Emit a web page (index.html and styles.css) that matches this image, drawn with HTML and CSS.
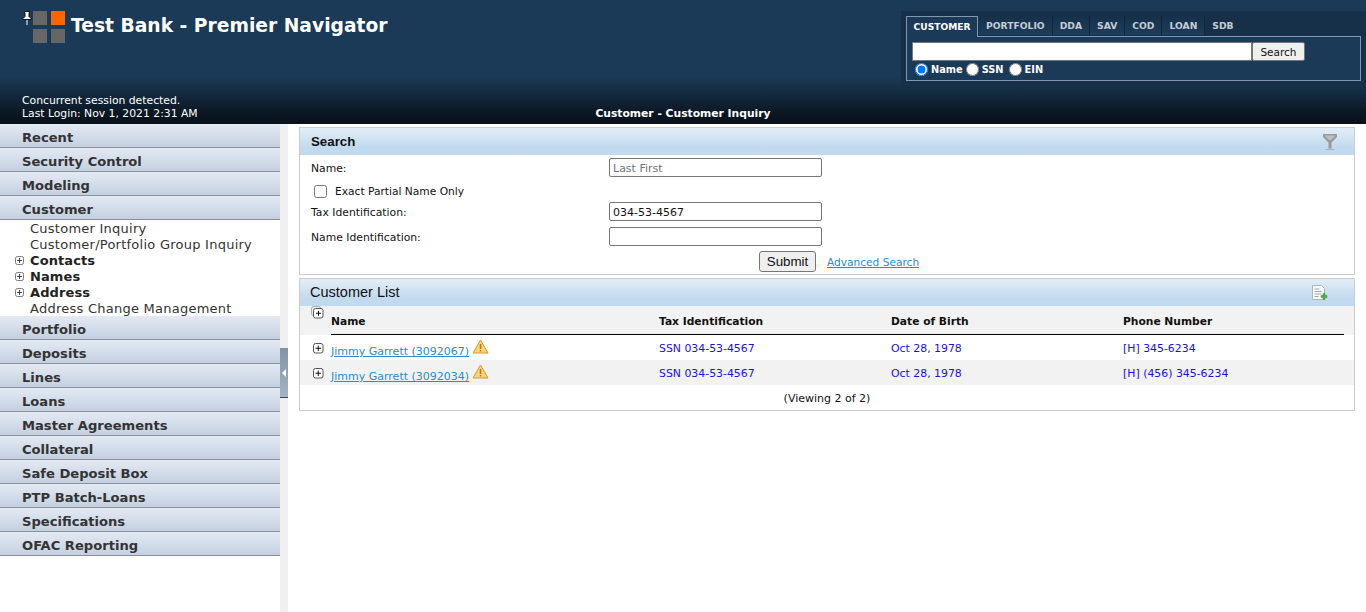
FILE: index.html
```html
<!DOCTYPE html>
<html lang="en">
<head>
<meta charset="utf-8">
<title>Test Bank - Premier Navigator</title>
<link rel="stylesheet" href="styles.css">
</head>
<body>
<header class="top">
  <div class="top-main">
    <div class="brand">
      <svg class="pin" width="10" height="15" viewBox="0 0 10 15"><path d="M2.500.5h5v1H7v4l2 2v1H1v-1l2-2v-4h-.5z" fill="#fff" stroke="#111" stroke-width="1"/><path d="M5 9v5" stroke="#fff" stroke-width="1"/></svg>
      <div class="logo"><i></i><i class="on"></i><i></i><i></i></div>
      <h1 class="app-title">Test Bank - Premier Navigator</h1>
    </div>
    <div class="quick">
      <div class="tabs">
        <span class="tab active">CUSTOMER</span><span class="tab">PORTFOLIO</span><span class="tab">DDA</span><span class="tab">SAV</span><span class="tab">COD</span><span class="tab">LOAN</span><span class="tab last">SDB</span>
      </div>
      <div class="quick-panel">
        <div class="quick-row"><input class="quick-input" type="text"><button class="quick-btn">Search</button></div>
        <div class="radios">
          <label><input type="radio" name="q" checked>Name</label>
          <label><input type="radio" name="q">SSN</label>
          <label><input type="radio" name="q">EIN</label>
        </div>
      </div>
    </div>
  </div>
  <div class="top-foot">
    <div class="session">Concurrent session detected.<br>Last Login: Nov 1, 2021 2:31 AM</div>
    <div class="page-title">Customer - Customer Inquiry</div>
    <div></div>
  </div>
</header>
<div class="body">
  <nav class="side">
    <a class="sec">Recent</a>
    <a class="sec">Security Control</a>
    <a class="sec">Modeling</a>
    <a class="sec">Customer</a>
    <ul class="sub">
      <li>Customer Inquiry</li>
      <li>Customer/Portfolio Group Inquiry</li>
      <li class="grp"><svg class="mini" width="9" height="9" viewBox="0 0 9 9"><rect x=".5" y=".5" width="8" height="8" rx="2" fill="#fff" stroke="#777"/><path d="M2 4.500h5M4.500 2v5" stroke="#444"/></svg>Contacts</li>
      <li class="grp"><svg class="mini" width="9" height="9" viewBox="0 0 9 9"><rect x=".5" y=".5" width="8" height="8" rx="2" fill="#fff" stroke="#777"/><path d="M2 4.500h5M4.500 2v5" stroke="#444"/></svg>Names</li>
      <li class="grp"><svg class="mini" width="9" height="9" viewBox="0 0 9 9"><rect x=".5" y=".5" width="8" height="8" rx="2" fill="#fff" stroke="#777"/><path d="M2 4.500h5M4.500 2v5" stroke="#444"/></svg>Address</li>
      <li>Address Change Management</li>
    </ul>
    <a class="sec">Portfolio</a>
    <a class="sec">Deposits</a>
    <a class="sec">Lines</a>
    <a class="sec">Loans</a>
    <a class="sec">Master Agreements</a>
    <a class="sec">Collateral</a>
    <a class="sec">Safe Deposit Box</a>
    <a class="sec">PTP Batch-Loans</a>
    <a class="sec">Specifications</a>
    <a class="sec">OFAC Reporting</a>
  </nav>
  <div class="gutter"><div class="handle"><span class="arrow"></span></div></div>
  <main class="main">
    <section class="panel search">
      <div class="panel-head">
        <h2 class="panel-title bold">Search</h2>
        <svg class="filter" width="14" height="16" viewBox="0 0 14 16"><path d="M0 0h14v3L8.500 8.500v6h-3v-6L0 3z" fill="#989a9c"/><path d="M1.500 1.500h11L8 6H6z" fill="#bcbec0"/><path d="M2.500 15.500h9" stroke="#aeb0b2"/></svg>
      </div>
      <div class="form">
        <label class="f-label">Name:</label><input class="f-input" type="text" placeholder="Last First">
        <label class="check"><input type="checkbox">Exact Partial Name Only</label>
        <label class="f-label">Tax Identification:</label><input class="f-input" type="text" value="034-53-4567">
        <label class="f-label">Name Identification:</label><input class="f-input" type="text">
      </div>
      <div class="actions"><button class="submit">Submit</button><a class="link adv">Advanced Search</a></div>
    </section>
    <section class="panel list">
      <div class="panel-head">
        <h2 class="panel-title">Customer List</h2>
        <svg class="docplus" width="17" height="16" viewBox="0 0 17 16"><path d="M1.500.5h9l3 3v11h-12z" fill="#fbfcfd" stroke="#a9b4bd"/><path d="M3.500 4h5M3.500 6.500h7M3.500 9h7M3.500 11.500h4" stroke="#9aa3aa"/><path d="M12 8.500h2v2h2v2h-2v2h-2v-2h-2v-2h2z" fill="#52ad52" stroke="#3a8f3a" stroke-width=".5"/></svg>
      </div>
      <table class="grid">
        <colgroup><col class="c0"><col class="c1"><col class="c2"><col class="c2"><col class="c3"><col class="c4"></colgroup>
        <thead>
          <tr>
            <th class="exp"><svg class="allplus" width="13" height="13" viewBox="0 0 13 13"><rect x=".5" y=".5" width="9" height="9" rx="2" fill="#eee" stroke="#aaa"/><rect x="2.500" y="2.500" width="9.500" height="9.500" rx="2" fill="#fff" stroke="#555"/><path d="M5 7.250h5M7.500 4.750v5" stroke="#111"/></svg></th>
            <th>Name</th><th>Tax Identification</th><th>Date of Birth</th><th>Phone Number</th><th class="blank"></th>
          </tr>
        </thead>
        <tbody>
          <tr>
            <td class="exp"><svg width="11" height="11" viewBox="0 0 11 11"><rect x=".5" y=".5" width="9.500" height="9.500" rx="2" fill="#fff" stroke="#555"/><path d="M2.500 5.250h5.500M5.250 2.500v5.500" stroke="#111"/></svg></td>
            <td class="name"><a class="link">Jimmy Garrett (3092067)</a><svg class="warn" width="17" height="15" viewBox="0 0 17 15"><path d="M8.500 1 16 14H1z" fill="#f7d774" stroke="#d9962c" stroke-linejoin="round"/><path d="M8.500 5v5M8.500 11v1.500" stroke="#b9781c" stroke-width="1.500"/></svg></td>
            <td class="val">SSN 034-53-4567</td><td class="val">Oct 28, 1978</td><td class="val">[H] 345-6234</td><td></td>
          </tr>
          <tr class="alt">
            <td class="exp"><svg width="11" height="11" viewBox="0 0 11 11"><rect x=".5" y=".5" width="9.500" height="9.500" rx="2" fill="#fff" stroke="#555"/><path d="M2.500 5.250h5.500M5.250 2.500v5.500" stroke="#111"/></svg></td>
            <td class="name"><a class="link">Jimmy Garrett (3092034)</a><svg class="warn" width="17" height="15" viewBox="0 0 17 15"><path d="M8.500 1 16 14H1z" fill="#f7d774" stroke="#d9962c" stroke-linejoin="round"/><path d="M8.500 5v5M8.500 11v1.500" stroke="#b9781c" stroke-width="1.500"/></svg></td>
            <td class="val">SSN 034-53-4567</td><td class="val">Oct 28, 1978</td><td class="val">[H] (456) 345-6234</td><td></td>
          </tr>
        </tbody>
      </table>
      <div class="viewing">(Viewing 2 of 2)</div>
    </section>
  </main>
</div>
</body>
</html>
```
FILE: styles.css
```css
* { box-sizing: border-box; }
html, body { margin: 0; height: 100%; }
body {
  display: flex; flex-direction: column; height: 612px; overflow: hidden;
  font-family: "DejaVu Sans", Verdana, sans-serif; font-size: 11px; color: #111; background: #fff;
}
.top {
  height: 124px; flex: none; display: flex; flex-direction: column; justify-content: space-between;
  background: linear-gradient(to bottom, #1b3a57 0, #1b3a57 76px, #0a1520 116px, #09121b 124px);
  color: #fff;
}
.top-main { display: flex; justify-content: space-between; align-items: flex-start; }
.brand { display: flex; align-items: flex-start; padding: 11px 0 0 22px; }
.pin { flex: none; margin-right: 1px; }
.logo { display: grid; grid-template-columns: 14px 14px; gap: 4px; width: 32px; flex: none; }
.logo i { display: block; height: 14px; background: #666; }
.logo i.on { background: #f60; }
.app-title { margin: 3px 0 0 6px; font-size: 18.700px; line-height: 24px; font-weight: bold; color: #fff; }
.quick { width: 465px; height: 76px; margin-top: 11px; padding: 5px 5px 6px; background: #16304a; }
.tabs { display: flex; height: 20px; position: relative; z-index: 1; }
.tab {
  font-size: 9.200px; font-weight: bold; color: #c5ccd3; line-height: 20px; height: 19px; padding: 0 7px;
  border-right: 1px solid #10243a;
  background: linear-gradient(to bottom, #16304a, #1d3d5b);
}
.tab.last { border-right: 0; background: none; }
.tab.active {
  color: #fff; height: 21px; width: 72px; margin-right: 1px; padding: 0; text-align: center; background: #1b3a57;
  font-size: 9.100px; line-height: 21px;
  border: 1px solid #8398ad; border-bottom: 0;
}
.quick-panel { height: 45px; border: 1px solid #8398ad; background: #1b3a57; padding: 5px 5px 0; }
.quick-row { display: flex; height: 19px; }
.quick-input { width: 340px; height: 19px; border: 1px solid #777; background: #fff; padding: 0; margin: 0; }
.quick-btn {
  width: 53px; height: 19px; padding: 1px 0 0; font: 10.500px "DejaVu Sans", sans-serif; color: #111;
  background: #efefef; border: 1px solid #767676; border-radius: 2px;
}
.radios { display: flex; align-items: center; height: 14px; margin-top: 1px; font-size: 9.800px; font-weight: bold; color: #fff; }
.radios label { display: flex; align-items: center; }
.radios label:last-child { margin-left: 2px; }
.radios input { width: 13px; height: 13px; margin: 0 3px 0 3px; }
.top-foot { display: grid; grid-template-columns: 1fr auto 1fr; align-items: end; padding: 0 0 4px 0; }
.session { font-size: 10.800px; line-height: 13px; padding-left: 22px; }
.page-title { font-size: 10.750px; font-weight: bold; line-height: 12px; }

.body { flex: 1; display: flex; min-height: 0; }
.side { width: 280px; flex: none; background: #fff; }
.sec {
  display: block; height: 24px; padding-left: 22px; line-height: 27px; font-size: 13.100px; font-weight: bold; color: #333;
  background: linear-gradient(to bottom, #e4eaf3, #c4d0e1); border-bottom: 1px solid #8c9196;
}
.sub { list-style: none; margin: 0; padding: 0; }
.sub li { height: 16px; line-height: 17px; padding-left: 30px; font-size: 13px; letter-spacing: .25px; color: #333; position: relative; }
.sub li.grp { font-weight: bold; letter-spacing: .1px; color: #222; }
.mini { position: absolute; left: 15px; top: 4px; }
.gutter { width: 8px; flex: none; background: #f0f0f0; }
.handle {
  display: flex; align-items: center; justify-content: center; height: 50px; margin-top: 224px;
  background: linear-gradient(to bottom, #8393a5, #a5b3c4); border-bottom: 1px solid #3a4754;
}
.arrow { width: 0; height: 0; border: 4px solid transparent; border-left: 0; border-right: 4px solid #fff; }
.main { flex: 1; min-width: 0; padding: 3px 11px 0; background: #fff; }
.panel { border: 1px solid #ccc; }
.panel-head {
  height: 27px; display: flex; align-items: center; justify-content: space-between; padding: 0 17px 0 10px;
  background: linear-gradient(to bottom, #e3eef7, #c3daee 70%, #c2daee);
}
.list .panel-head { padding-right: 26px; }
.panel-title { margin: 0; padding-bottom: 2px; font: normal 14.500px "Liberation Sans", sans-serif; color: #111; }
.panel-title.bold { font-weight: bold; font-size: 13.300px; padding: 0 0 0 1px; }
.search { height: 148px; }
.form { display: grid; grid-template-columns: 298px 213px; padding: 3px 0 0 11px; align-items: center; }
.f-label { height: 19px; line-height: 22px; font-size: 10.800px; margin-bottom: 6px; }
.f-input {
  width: 213px; height: 19px; padding: 1px 3px 0; margin: 0 0 6px; border: 1px solid #767676; border-radius: 2px;
  font: 11px "DejaVu Sans", sans-serif; color: #111; background: #fff;
}
.f-input::placeholder { color: #757575; }
.check { grid-column: 1 / span 2; display: flex; align-items: center; height: 16px; margin: 0 0 3px; font-size: 10.670px; }
.check input { width: 13px; height: 13px; margin: 0 8px 0 3px; }
.actions { display: flex; align-items: center; padding-left: 459px; margin-top: -1px; }
.submit {
  width: 57px; height: 21px; padding: 0; font: 13.330px "Liberation Sans", sans-serif; color: #111;
  background: #efefef; border: 1px solid #767676; border-radius: 3px;
}
.link { color: #2a8bd0; text-decoration: underline; }
.adv { margin-left: 11px; font-size: 10.600px; }
.list { margin-top: 3px; height: 133px; }
.grid { width: 100%; border-collapse: separate; border-spacing: 0; table-layout: fixed; }
.c0 { width: 31px; } .c1 { width: 328px; } .c2 { width: 232px; } .c3 { width: 221px; }
.grid thead tr { background: #f2f2f2; }
.grid th { text-align: left; font-size: 10.700px; font-weight: bold; padding: 0 0 1px; border-bottom: 1px solid #000; vertical-align: bottom; line-height: 22px; height: 29px; }
.grid th.exp, .grid th.blank { border-bottom: 0; }
.grid th.exp { vertical-align: top; padding: 0 0 0 11px; line-height: 0; }
.grid td { height: 25px; padding: 2px 0 0; font-size: 11px; }
.grid td.exp { padding: 1px 0 0 13px; line-height: 0; }
.grid tr.alt { background: #f2f2f2; }
.grid .val { color: #1a10e0; font-size: 10.900px; }
.name { white-space: nowrap; }
.warn { margin-left: 3px; vertical-align: 1px; }
.viewing { text-align: center; line-height: 27px; height: 25px; font-size: 11px; }
```
